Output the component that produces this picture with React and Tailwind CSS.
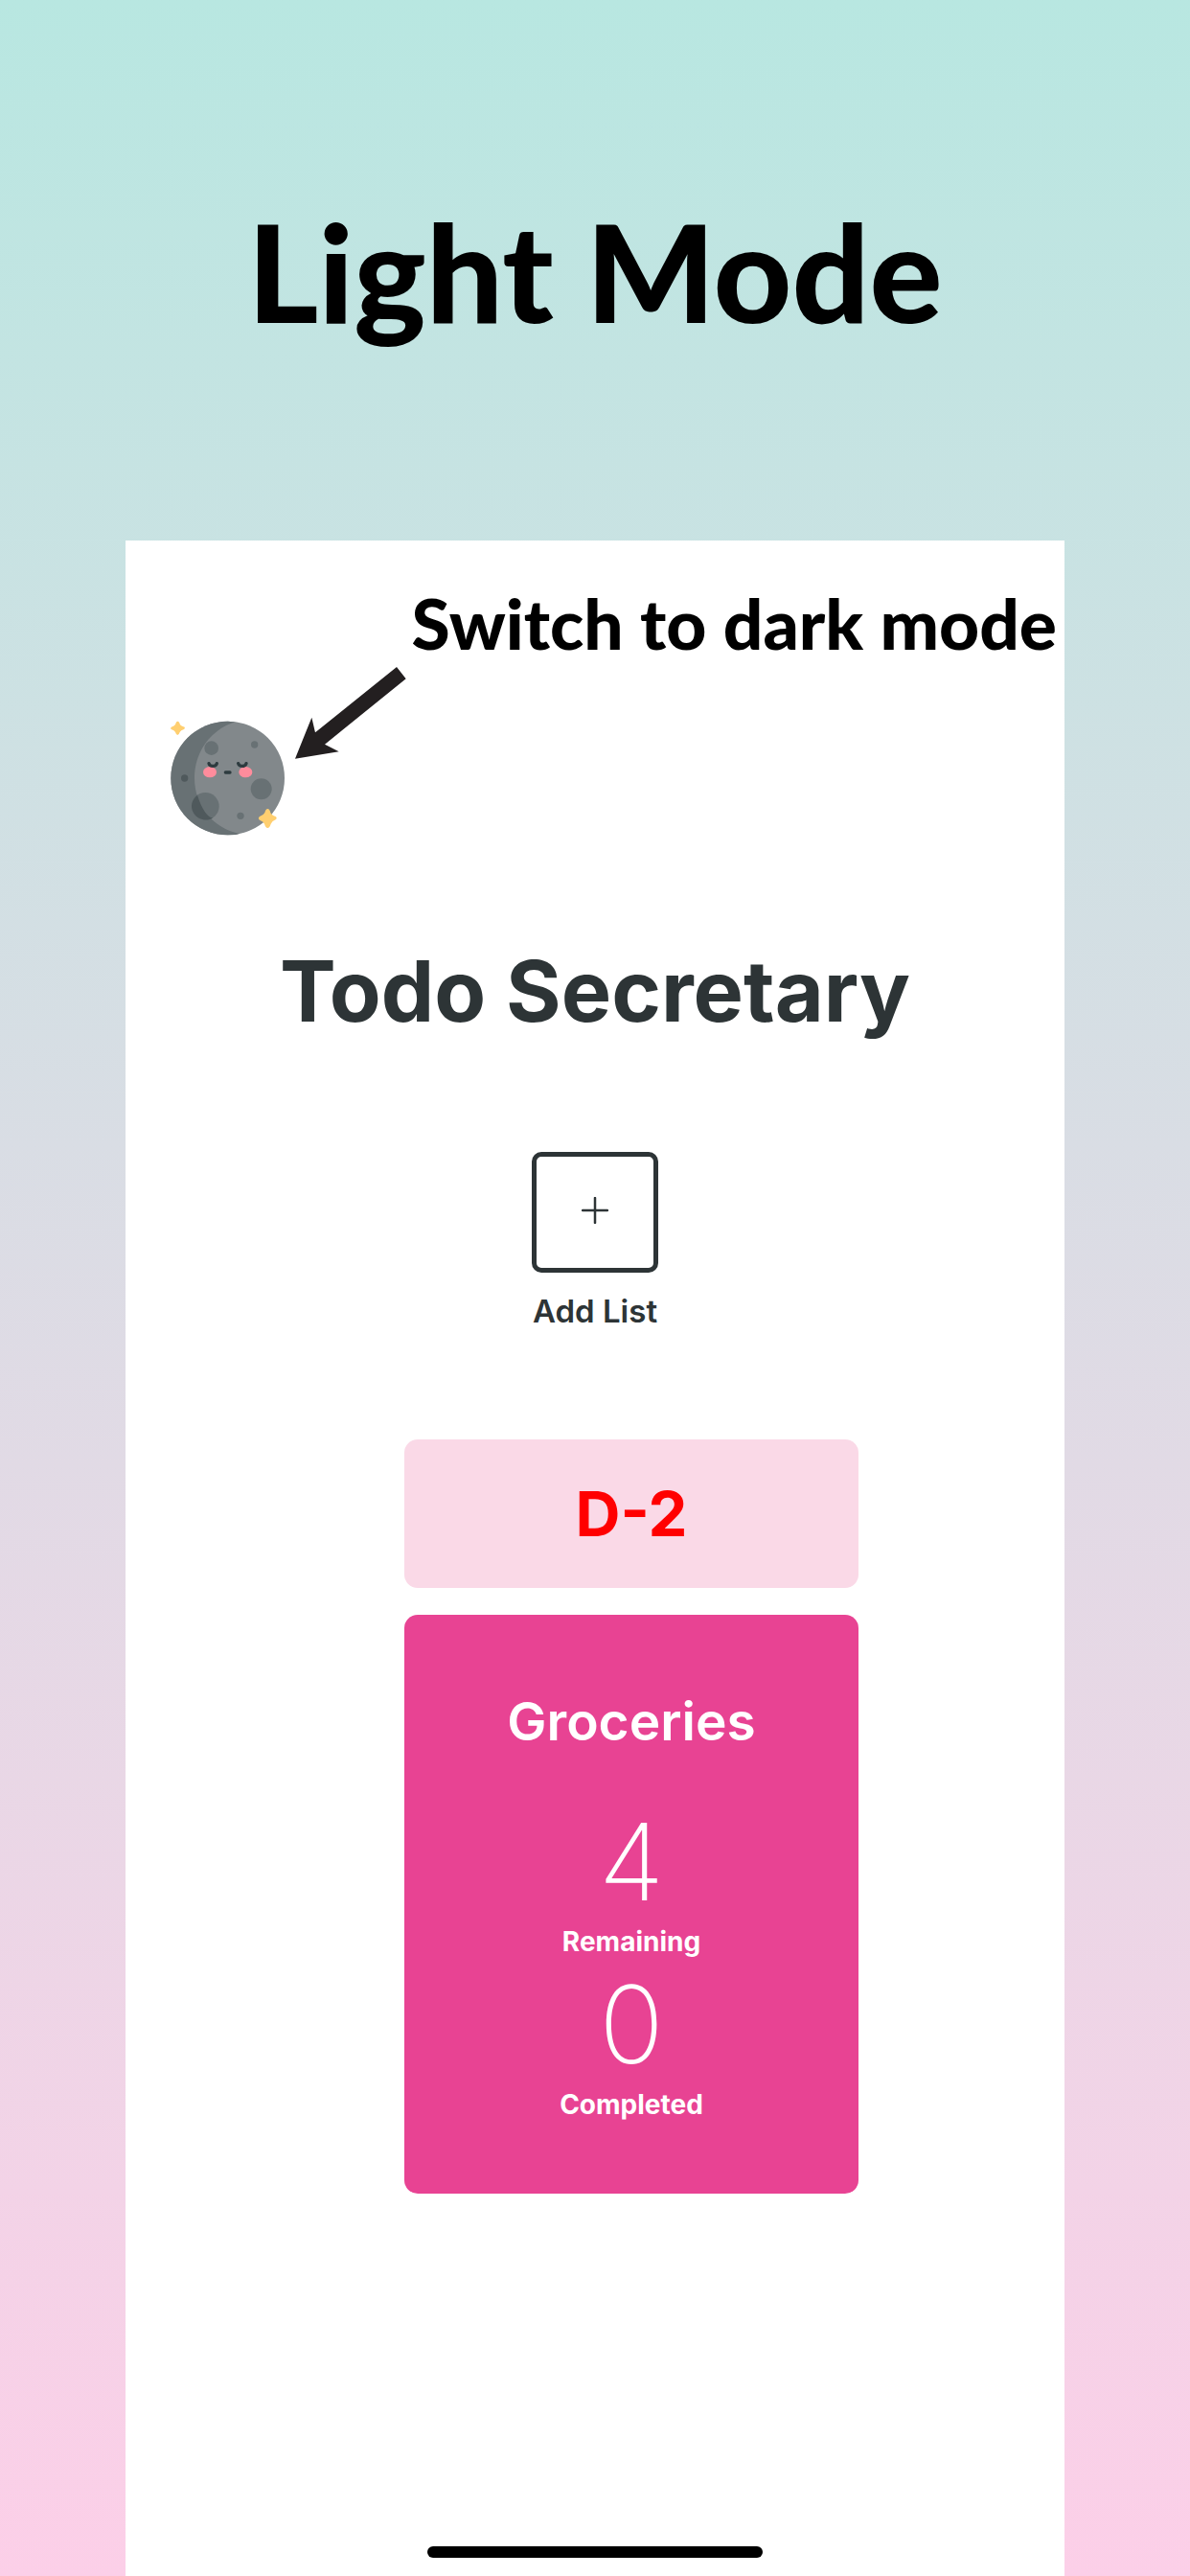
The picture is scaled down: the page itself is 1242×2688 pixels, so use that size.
function Moon() {
  return (
    <svg viewBox="54 219 360 360" className="size-[120px]" aria-hidden="true">
      <defs>
        <clipPath id="disc">
          <circle cx="233" cy="399" r="178" />
        </clipPath>
      </defs>
      <circle cx="233" cy="399" r="178" fill="#82888b" />
      <g clipPath="url(#disc)">
        <path d="M268 220C185 240 129 312 129 399C129 486 188 557 272 573L233 600H40V200H268Z" fill="#687174" />
        <circle cx="182" cy="305" r="22" fill="#687174" />
        <circle cx="317" cy="294" r="11" fill="#687174" />
        <circle cx="338" cy="433" r="33" fill="#687174" />
        <circle cx="273" cy="517" r="11" fill="#687174" />
        <circle cx="98" cy="399" r="11" fill="#4f595c" />
        <circle cx="163" cy="487" r="43" fill="#687174" />
      </g>
      <path d="M138 452C151 496 173 525 187 523C171 535 140 532 126 508C114 488 121 464 138 452Z" fill="#4f595c" />
      <ellipse cx="177" cy="380" rx="21" ry="17" fill="#ff8c9c" />
      <ellipse cx="289" cy="380" rx="21" ry="17" fill="#ff8c9c" />
      <g fill="none" stroke="#2d3b3f" strokeWidth="10" strokeLinecap="round">
        <path d="M174 353C177 364 196 364 199 353" />
        <path d="M266 353C269 364 288 364 291 353" />
        <path d="M226 381H240" />
      </g>
      <g fill="#ffcf70">
        <path d="M76 221Q81 220 84 232Q87 236 98 239Q100 243 96 246Q86 249 83 255Q80 264 76 264Q72 264 69 255Q66 249 56 246Q53 243 56 239Q66 236 69 231Q72 220 76 221Z" />
        <path d="M358 495Q364 495 367 507Q370 515 383 519Q389 524 383 529Q372 533 368 542Q364 555 358 555Q352 555 348 542Q345 534 333 530Q326 525 333 519Q345 515 349 507Q352 495 358 495Z" />
      </g>
    </svg>
  );
}

function Stat({ value, label }) {
  return (
    <div className="flex h-[170px] flex-col items-center">
      <dd className="order-1 text-[112px] leading-[120px] font-extralight">{value}</dd>
      <dt className="order-2 text-[28px] leading-[48px] font-bold">{label}</dt>
    </div>
  );
}

export default function App() {
  return (
    <div className='flex min-h-screen flex-col bg-linear-to-b from-[#b8e7e1] to-[#fccfe8] font-["Inter","Liberation_Sans",sans-serif] text-[#2d3436]'>
      <header className="flex h-[564px] items-center justify-center">
        <h1 className='font-["Lato","Noto_Sans",sans-serif] text-[142px] leading-none font-black text-black'>Light Mode</h1>
      </header>

      <main className="mx-[131px] flex flex-1 flex-col bg-white">
        <p className='pt-11 pr-2 text-right font-["Lato","Noto_Sans",sans-serif] text-[73px] leading-[84px] font-black whitespace-nowrap text-black'>
          Switch to dark mode
        </p>
        <div className="mt-1 flex h-[176px] gap-2.5 pl-[47px]">
          <button type="button" aria-label="Switch to dark mode" className="self-end">
            <Moon />
          </button>
          <svg viewBox="443 49 348 288" className="h-[96px] w-[116px]" aria-hidden="true">
            <path d="M443 336L495 207L506 254L761 49L790 86L536 291L580 314Z" fill="#231f20" />
          </svg>
        </div>

        <h2 className="mt-[108px] text-center text-[88px] leading-[108px] font-bold">Todo Secretary</h2>

        <div className="mt-[114px] flex flex-col items-center">
          <button
            type="button"
            aria-labelledby="add-list"
            className="flex h-[126px] w-[132px] items-center justify-center rounded-[10px] border-[5px] border-[#2d3436] pb-1"
          >
            <svg viewBox="0 0 28 28" className="size-7" aria-hidden="true">
              <path d="M14 1V27M1 14H27" stroke="#2d3436" strokeWidth="2.5" strokeLinecap="round" />
            </svg>
          </button>
          <span id="add-list" className="mt-5 text-[33px] leading-[40px] font-semibold">Add List</span>
        </div>

        <section className="mt-[114px] flex flex-col items-center gap-7 pl-[76px]">
          <div className="flex h-[155px] w-[474px] items-center justify-center rounded-[14px] bg-[#fad9e7] text-[65px] font-bold text-[#ff0000]">
            D-2
          </div>
          <article className="flex h-[604px] w-[474px] flex-col items-center rounded-[14px] bg-[#e84393] pt-[77px] text-white">
            <h3 className="text-[55px] leading-[68px] font-semibold">Groceries</h3>
            <dl className="mt-[52px]">
              <Stat value="4" label="Remaining" />
              <Stat value="0" label="Completed" />
            </dl>
          </article>
        </section>

        <div className="mt-auto mb-[19px] h-3 w-[350px] self-center rounded-full bg-black" />
      </main>
    </div>
  );
}
